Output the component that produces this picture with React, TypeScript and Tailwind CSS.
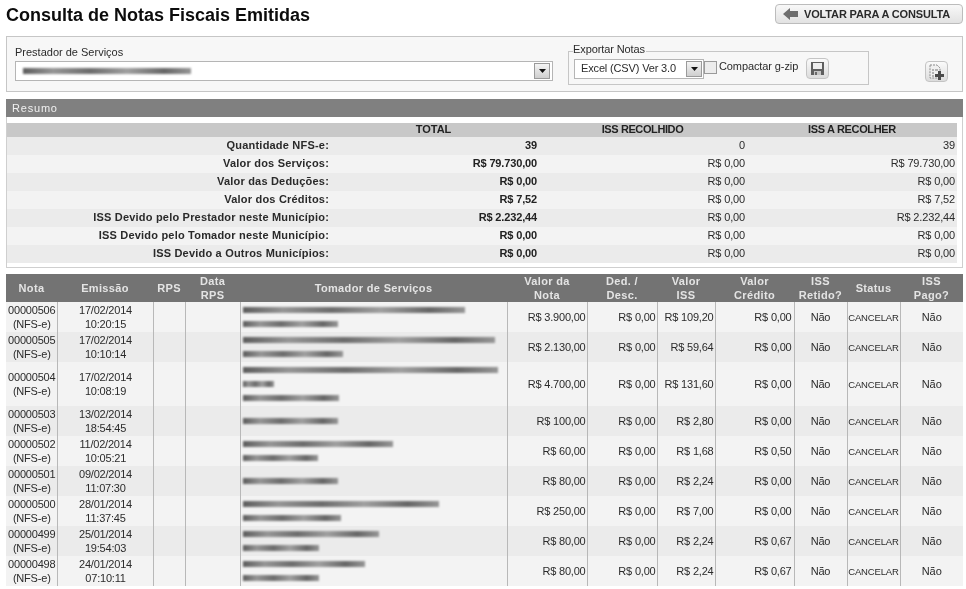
import React from 'react';

const resumo = [
  ['Quantidade NFS-e:', '39', '0', '39'],
  ['Valor dos Serviços:', 'R$ 79.730,00', 'R$ 0,00', 'R$ 79.730,00'],
  ['Valor das Deduções:', 'R$ 0,00', 'R$ 0,00', 'R$ 0,00'],
  ['Valor dos Créditos:', 'R$ 7,52', 'R$ 0,00', 'R$ 7,52'],
  ['ISS Devido pelo Prestador neste Município:', 'R$ 2.232,44', 'R$ 0,00', 'R$ 2.232,44'],
  ['ISS Devido pelo Tomador neste Município:', 'R$ 0,00', 'R$ 0,00', 'R$ 0,00'],
  ['ISS Devido a Outros Municípios:', 'R$ 0,00', 'R$ 0,00', 'R$ 0,00'],
];

// blur bars stand in for the masked names, widths are taken from the picture
const notas = [
  { nota: '00000506', data: '17/02/2014', hora: '10:20:15', bars: [222, 95], valor: 'R$ 3.900,00', iss: 'R$ 109,20', cred: 'R$ 0,00', h: 'h-[30px]' },
  { nota: '00000505', data: '17/02/2014', hora: '10:10:14', bars: [252, 100], valor: 'R$ 2.130,00', iss: 'R$ 59,64', cred: 'R$ 0,00', h: 'h-[30px]' },
  { nota: '00000504', data: '17/02/2014', hora: '10:08:19', bars: [255, 31, 96], valor: 'R$ 4.700,00', iss: 'R$ 131,60', cred: 'R$ 0,00', h: 'h-[44px]' },
  { nota: '00000503', data: '13/02/2014', hora: '18:54:45', bars: [95], valor: 'R$ 100,00', iss: 'R$ 2,80', cred: 'R$ 0,00', h: 'h-[30px]' },
  { nota: '00000502', data: '11/02/2014', hora: '10:05:21', bars: [150, 75], valor: 'R$ 60,00', iss: 'R$ 1,68', cred: 'R$ 0,50', h: 'h-[30px]' },
  { nota: '00000501', data: '09/02/2014', hora: '11:07:30', bars: [95], valor: 'R$ 80,00', iss: 'R$ 2,24', cred: 'R$ 0,00', h: 'h-[30px]' },
  { nota: '00000500', data: '28/01/2014', hora: '11:37:45', bars: [196, 98], valor: 'R$ 250,00', iss: 'R$ 7,00', cred: 'R$ 0,00', h: 'h-[30px]' },
  { nota: '00000499', data: '25/01/2014', hora: '19:54:03', bars: [136, 76], valor: 'R$ 80,00', iss: 'R$ 2,24', cred: 'R$ 0,67', h: 'h-[30px]' },
  { nota: '00000498', data: '24/01/2014', hora: '07:10:11', bars: [122, 76], valor: 'R$ 80,00', iss: 'R$ 2,24', cred: 'R$ 0,67', h: 'h-[30px]' },
];

const th = 'font-bold text-[11px] leading-[14px] tracking-[0.35px] text-[#e4e4e4] text-center align-middle p-0';
const td = 'border-r border-[#b8b8b8] p-0 align-middle leading-[14px] text-[#2b2b2b] tracking-[-0.2px]';
const smudge = 'bg-[linear-gradient(90deg,#5c5c5c,#969696_18%,#6c6c6c_40%,#a0a0a0_62%,#666_84%,#969696)] blur-[1px]';

function Arrow() {
  return (
    <span className="w-[16px] h-[16px] border border-[#9a9a9a] bg-gradient-to-b from-[#f4f4f4] to-[#cfcfcf] flex items-center justify-center shrink-0">
      <svg width="9" height="6" viewBox="0 0 9 6"><path d="M1 1h7L4.5 5z" fill="#111" /></svg>
    </span>
  );
}

function IconButton({ children }: { children: React.ReactNode }) {
  return (
    <span className="w-[23px] h-[21px] rounded-[4px] border border-[#c4c4c4] bg-gradient-to-b from-[#fafafa] to-[#dcdcdc] flex items-center justify-center shrink-0">
      {children}
    </span>
  );
}

export default function App() {
  return (
    <div className="w-[966px] h-[589px] overflow-hidden bg-white font-['Liberation_Sans',Arial,sans-serif] text-[#222]">
      <div className="will-change-transform">
        {/* Title */}
        <div className="flex items-start justify-between h-[36px] pl-[6px] pr-[3px]">
          <h1 className="text-[18px] leading-[21px] mt-[5px] font-bold text-[#0c0c0c]">Consulta de Notas Fiscais Emitidas</h1>
          <div className="mt-[4px] w-[188px] h-[20px] rounded-[4px] border border-[#bcbcbc] bg-gradient-to-b from-[#f8f8f8] to-[#e2e2e2] flex items-center pl-[7px] gap-[6px]">
            <svg width="15" height="12" viewBox="0 0 15 12"><path d="M0 6l7-6v3h8v6H7v3z" fill="#6e6e6e" /></svg>
            <span className="text-[11px] font-bold text-[#2a2a2a] tracking-[-0.15px]">VOLTAR PARA A CONSULTA</span>
          </div>
        </div>

        {/* Filter */}
        <div className="mx-[6px] w-[957px] h-[56px] border border-[#c6c6c6] bg-[#f7f7f7] flex">
          <div className="w-[547px] pl-[8px]">
            <div className="text-[11px] leading-[13px] mt-[9px] text-[#2b2b2b]">Prestador de Serviços</div>
            <div className="mt-[2px] w-[538px] h-[20px] border border-[#b5b5b5] bg-white flex items-center justify-between pr-[2px]">
              <div className={`ml-[7px] w-[168px] h-[6px] ${smudge}`} />
              <Arrow />
            </div>
          </div>
          <div className="ml-[14px] mt-[14px] w-[301px] h-[34px] border border-[#c6c6c6] flex items-center pl-[5px] relative">
            <span className="absolute left-[4px] -top-[9px] bg-[#f7f7f7] pr-[1px] text-[11px] leading-[13px] text-[#2b2b2b] tracking-[-0.1px]">Exportar Notas</span>
            <div className="w-[130px] h-[20px] mt-[1px] border border-[#b5b5b5] bg-white flex items-center justify-between pr-[1px]">
              <span className="pl-[6px] text-[11px] text-[#2b2b2b] tracking-[-0.15px]">Excel (CSV) Ver 3.0</span>
              <Arrow />
            </div>
            <span className="w-[13px] h-[13px] border border-[#9a9a9a] bg-[#ececec] -mt-[1px]" />
            <span className="text-[11px] text-[#2b2b2b] ml-[2px] -mt-[3px] tracking-[-0.1px]">Compactar g-zip</span>
            <span className="ml-[8px] mt-[1px]">
              <IconButton>
                <svg width="15" height="15" viewBox="0 0 15 15">
                  <path d="M1 1h13v13H1z" fill="#5f5f5f" />
                  <path d="M3 2h9v6H3z" fill="#eeeeee" />
                  <path d="M4 10h7v4H4z" fill="#c4c4c4" />
                  <path d="M5 11h2v3H5z" fill="#6a6a6a" />
                </svg>
              </IconButton>
            </span>
          </div>
          <span className="ml-[56px] mt-[24px]">
            <IconButton>
              <svg width="17" height="16" viewBox="0 0 17 16">
                <path d="M2 1h7l3 3v10H2z" fill="#f0f0f0" stroke="#8a8a8a" strokeDasharray="2 1" />
                <path d="M4 6h2M7 6h3M4 9h2M4 12h2" stroke="#777" />
                <path d="M10 7h3v3h3v3h-3v3h-3v-3H7v-3h3z" fill="#4a4a4a" />
              </svg>
            </IconButton>
          </span>
        </div>

        {/* Resumo */}
        <div className="mx-[6px] mt-[7px] w-[957px]">
          <div className="h-[18px] bg-[#808080] pl-[6px] text-[11px] leading-[18px] tracking-[0.8px] text-[#f0f0f0]">Resumo</div>
          <div className="border border-[#cfcfcf] border-t-0 h-[151px] pt-[6px] pr-[5px]">
            <table className="w-[950px] table-fixed border-collapse text-[11px]">
              <colgroup>
                <col className="w-[322px]" />
                <col className="w-[209px]" />
                <col className="w-[209px]" />
                <col className="w-[210px]" />
              </colgroup>
              <thead>
                <tr className="h-[14px] bg-[#c8c8c8] text-[#222]">
                  <th className="p-0" />
                  <th className="p-0 pb-[1px] font-bold text-center leading-[13px]">TOTAL</th>
                  <th className="p-0 pb-[1px] font-bold text-center leading-[13px] tracking-[-0.4px]">ISS RECOLHIDO</th>
                  <th className="p-0 pb-[1px] font-bold text-center leading-[13px] tracking-[-0.35px]">ISS A RECOLHER</th>
                </tr>
              </thead>
              <tbody>
                {resumo.map((r, i) => (
                  <tr key={r[0]} className={i % 2 === 0 ? 'h-[18px] bg-[#ebebeb]' : 'h-[18px] bg-[#f3f3f3]'}>
                    <td className="p-0 pb-[2px] leading-[14px] text-right font-bold text-[#2a2a2a] tracking-[0.2px]">{r[0]}</td>
                    <td className="p-0 pb-[2px] pr-[1px] leading-[14px] text-right font-bold text-[#222] tracking-[-0.15px]">{r[1]}</td>
                    <td className="p-0 pb-[2px] pr-[2px] leading-[14px] text-right text-[#2b2b2b] tracking-[-0.15px]">{r[2]}</td>
                    <td className="p-0 pb-[2px] pr-[2px] leading-[14px] text-right text-[#2b2b2b] tracking-[-0.15px]">{r[3]}</td>
                  </tr>
                ))}
              </tbody>
            </table>
          </div>
        </div>

        {/* Notas */}
        <table className="ml-[6px] mt-[6px] w-[957px] table-fixed border-collapse text-[11px]">
          <colgroup>
            <col className="w-[51px]" />
            <col className="w-[96px]" />
            <col className="w-[32px]" />
            <col className="w-[55px]" />
            <col className="w-[267px]" />
            <col className="w-[80px]" />
            <col className="w-[70px]" />
            <col className="w-[58px]" />
            <col className="w-[79px]" />
            <col className="w-[53px]" />
            <col className="w-[53px]" />
            <col className="w-[63px]" />
          </colgroup>
          <thead>
            <tr className="h-[28px] bg-[#737373]">
              <th className={th}>Nota</th>
              <th className={th}>Emissão</th>
              <th className={th}>RPS</th>
              <th className={th}>Data<br />RPS</th>
              <th className={th}>Tomador de Serviços</th>
              <th className={th}>Valor da<br />Nota</th>
              <th className={th}>Ded. /<br />Desc.</th>
              <th className={th}>Valor<br />ISS</th>
              <th className={th}>Valor<br />Crédito</th>
              <th className={th}>ISS<br />Retido?</th>
              <th className={th}>Status</th>
              <th className={th}>ISS<br />Pago?</th>
            </tr>
          </thead>
          <tbody>
            {notas.map((n, i) => (
              <tr key={n.nota} className={`${n.h} ${i % 2 === 0 ? 'bg-[#f3f3f3]' : 'bg-[#ebebeb]'}`}>
                <td className={`${td} text-center pl-[1px]`}>{n.nota}<br />(NFS-e)</td>
                <td className={`${td} text-center pl-[1px]`}>{n.data}<br />{n.hora}</td>
                <td className={td} />
                <td className={td} />
                <td className={`${td} pl-[2px]`}>
                  <div className="flex flex-col gap-[8px]">
                    {n.bars.map((w, b) => (
                      <div key={b} className={`h-[6px] ${smudge}`} style={{ width: w }} />
                    ))}
                  </div>
                </td>
                <td className={`${td} text-right pr-[1px]`}>{n.valor}</td>
                <td className={`${td} text-right pr-[1px]`}>R$ 0,00</td>
                <td className={`${td} text-right pr-[1px]`}>{n.iss}</td>
                <td className={`${td} text-right pr-[2px]`}>{n.cred}</td>
                <td className={`${td} text-center`}>Não</td>
                <td className={`${td} text-center`}><span className="text-[9.5px] tracking-[-0.15px]">CANCELAR</span></td>
                <td className="p-0 align-middle leading-[14px] text-[#2b2b2b] text-center">Não</td>
              </tr>
            ))}
          </tbody>
        </table>
      </div>
    </div>
  );
}
